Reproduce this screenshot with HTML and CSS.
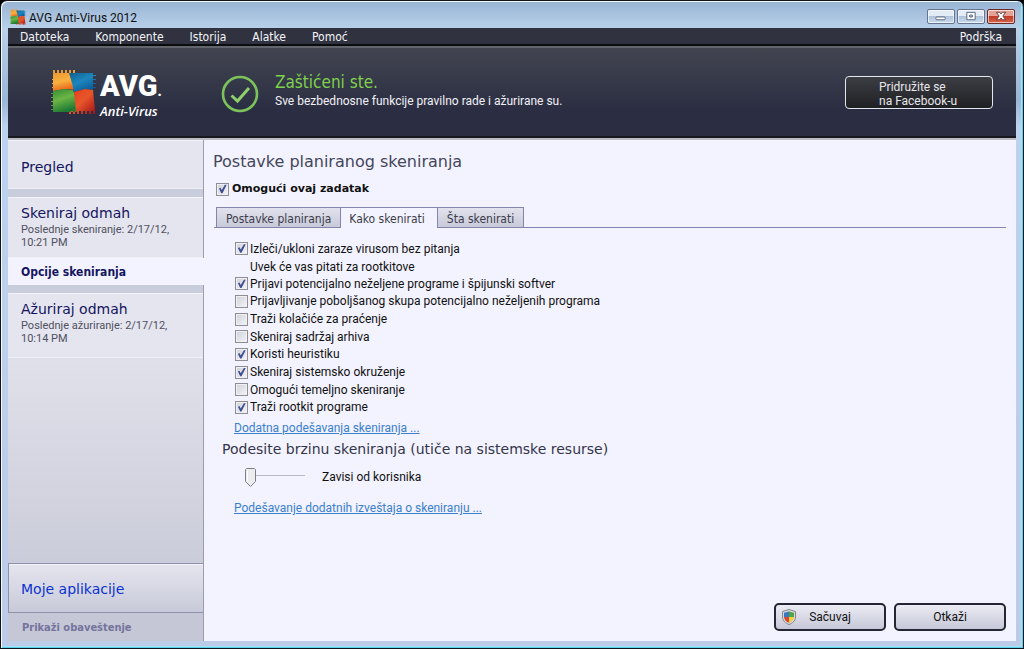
FILE: index.html
```html
<!DOCTYPE html>
<html lang="sr-Latn">
<head>
<meta charset="utf-8">
<title>AVG Anti-Virus 2012</title>
<link rel="stylesheet" href="styles.css">
</head>
<body>
<svg class="defs" width="0" height="0" aria-hidden="true">
  <defs>
    <linearGradient id="orange" x1="0" y1="0" x2="0.3" y2="1"><stop offset="0" stop-color="#e8912a"/><stop offset="0.6" stop-color="#f9b040"/><stop offset="1" stop-color="#e8661c"/></linearGradient>
    <linearGradient id="blue" x1="0" y1="0" x2="0.6" y2="1"><stop offset="0" stop-color="#0f5f8e"/><stop offset="0.5" stop-color="#1d86bd"/><stop offset="1" stop-color="#0d5a9a"/></linearGradient>
    <linearGradient id="green" x1="0" y1="0" x2="0.4" y2="1"><stop offset="0" stop-color="#2f8a35"/><stop offset="0.5" stop-color="#6cb544"/><stop offset="1" stop-color="#1f7a34"/></linearGradient>
    <linearGradient id="red" x1="0" y1="0" x2="1" y2="1"><stop offset="0" stop-color="#e23a1c"/><stop offset="0.5" stop-color="#e8562a"/><stop offset="1" stop-color="#a01018"/></linearGradient>
    <symbol id="flag" viewBox="0 0 46 46">
      <path fill="url(#orange)" d="M2 1h2v3h2V1h2v3h2V1h2v3h2V1h2v3h2V1h2v3h2V1h2v5l4 15-13-1-13 2v-3H1v-1h1v-3H1v-1h1v-3H1v-1h1z"/>
      <path fill="url(#green)" d="M2 22l11-2 9 1 4 11 2 11H2v-2H0v-1h2v-3H0v-1h2v-3H0v-1h2v-3H0v-1h2v-3H0v-1h2z"/>
      <path fill="url(#blue)" d="M18 4h24v2h3v1h-3v3h3v1h-3v3h3v1h-3v3h3v1h-3v2l-8-1-11 3-2-9z"/>
      <path fill="url(#red)" d="M23 23l11-3 8 1 2 20v4h-2v-3h-2v3h-2v-3h-2v3h-2v-3h-2v3h-2v-3h-2v3h-2v-3h-2v3h-2v-3h-2v3h-2v-2h7z"/>
    </symbol>
  </defs>
</svg>
<div class="window">
  <header class="titlebar">
    <svg class="app-icon" aria-hidden="true"><use href="#flag"/></svg>
    <span class="app-title">AVG Anti-Virus 2012</span>
    <div class="window-buttons">
      <button class="wbtn" aria-label="Minimize"><svg viewBox="0 0 26 14"><rect x="7.5" y="7.5" width="10" height="3" rx="1" fill="#fff" stroke="#51617a"/></svg></button>
      <button class="wbtn" aria-label="Maximize"><svg viewBox="0 0 26 14"><path fill="#fff" fill-rule="evenodd" stroke="#51617a" d="M8.500 2.500h9v8h-9zM11.500 5.500h3v2h-3z"/></svg></button>
      <button class="wbtn close" aria-label="Close"><svg viewBox="0 0 26 14"><path fill="#fff" stroke="#66383a" d="M8 2.500h3.500l1.500 1.800 1.500-1.800H18L15 6.500l3 4h-3.500L13 8.700l-1.500 1.800H8l3-4z"/></svg></button>
    </div>
  </header>
  <div class="client">
    <nav class="menu">
      <a href="#">Datoteka</a><a href="#">Komponente</a><a href="#">Istorija</a><a href="#">Alatke</a><a href="#">Pomoć</a><a href="#" class="support">Podrška</a>
    </nav>
    <section class="banner">
      <div class="brand">
        <svg class="brand-flag" aria-hidden="true"><use href="#flag"/></svg>
        <div class="brand-text"><div class="brand-name">AVG<span class="dot">.</span></div><div class="brand-sub">Anti-Virus</div></div>
      </div>
      <svg class="status-icon" viewBox="0 0 38 38" aria-hidden="true"><circle cx="19" cy="19" r="17" fill="none" stroke="#7cc35c" stroke-width="2.600"/><path d="M10.500 20.500l6 5.500L28 13" fill="none" stroke="#8ecf6c" stroke-width="3"/></svg>
      <div class="status"><h1>Zaštićeni ste.</h1><p>Sve bezbednosne funkcije pravilno rade i ažurirane su.</p></div>
      <button class="facebook"><span>Pridružite se<br>na Facebook-u</span></button>
    </section>
    <div class="body">
      <aside class="sidebar">
        <a href="#" class="card overview"><strong>Pregled</strong></a>
        <a href="#" class="card scan"><strong>Skeniraj odmah</strong><span>Poslednje skeniranje: 2/17/12,<br>10:21 PM</span></a>
        <a href="#" class="current">Opcije skeniranja</a>
        <a href="#" class="card update"><strong>Ažuriraj odmah</strong><span>Poslednje ažuriranje: 2/17/12,<br>10:14 PM</span></a>
        <a href="#" class="apps">Moje aplikacije</a>
        <a href="#" class="notice">Prikaži obaveštenje</a>
      </aside>
      <main class="main">
        <h2>Postavke planiranog skeniranja</h2>
        <label class="check enable"><input type="checkbox" checked>Omogući ovaj zadatak</label>
        <div class="tabs" role="tablist">
          <button role="tab" class="tab">Postavke planiranja</button><button role="tab" class="tab active" aria-selected="true">Kako skenirati</button><button role="tab" class="tab">Šta skenirati</button>
        </div>
        <div class="options">
          <label class="check"><input type="checkbox" checked>Izleči/ukloni zaraze virusom bez pitanja</label>
          <p class="hint">Uvek će vas pitati za rootkitove</p>
          <label class="check"><input type="checkbox" checked>Prijavi potencijalno neželjene programe i špijunski softver</label>
          <label class="check"><input type="checkbox">Prijavljivanje poboljšanog skupa potencijalno neželjenih programa</label>
          <label class="check"><input type="checkbox">Traži kolačiće za praćenje</label>
          <label class="check"><input type="checkbox">Skeniraj sadržaj arhiva</label>
          <label class="check"><input type="checkbox" checked>Koristi heuristiku</label>
          <label class="check"><input type="checkbox" checked>Skeniraj sistemsko okruženje</label>
          <label class="check"><input type="checkbox">Omogući temeljno skeniranje</label>
          <label class="check"><input type="checkbox" checked>Traži rootkit programe</label>
        </div>
        <a href="#" class="link">Dodatna podešavanja skeniranja ...</a>
        <h3 id="speed">Podesite brzinu skeniranja (utiče na sistemske resurse)</h3>
        <div class="speed"><input type="range" min="0" max="3" value="0" aria-labelledby="speed"><span>Zavisi od korisnika</span></div>
        <a href="#" class="link">Podešavanje dodatnih izveštaja o skeniranju ...</a>
        <div class="actions">
          <button class="btn"><svg class="shield" viewBox="0 0 14 16" aria-hidden="true"><path d="M7 .5L13.500 2.500V8C13.500 12 10 14.500 7 15.500 4 14.500.5 12 .5 8V2.500z" fill="#d8d8d8" stroke="#85858c"/><path d="M7 2.500V8H2V3.800z" fill="#3b78c4"/><path d="M7 2.500l5 1.300V8H7z" fill="#4fa34a"/><path d="M2 8h5v5.800C4.500 12.800 2.200 11 2 8z" fill="#d8442f"/><path d="M7 8h5c-.2 3-2.500 4.800-5 5.800z" fill="#f2cf3d"/></svg><span>Sačuvaj</span></button>
          <button class="btn"><span>Otkaži</span></button>
        </div>
      </main>
    </div>
  </div>
</div>
</body>
</html>
```
FILE: styles.css
```css
* { box-sizing: border-box; }
body {
  margin: 0;
  background: #000;
  font: 12px/14px Roboto, sans-serif;
  color: #111;
}
h1, h2, h3, p { margin: 0; font-weight: normal; }
a { color: inherit; text-decoration: none; }
button { font: inherit; color: inherit; padding: 0; margin: 0; }
.defs { display: block; position: absolute; }

.window {
  display: flex;
  flex-direction: column;
  min-height: 100vh;
  padding: 0 6px 6px;
  border: 1px solid #10141c;
  border-radius: 7px 7px 0 0;
  background: linear-gradient(#98b4d4, #b9d1ea 28px, #9ab6d6 100px, #bcd2ee 125px, #bccbe8);
  box-shadow: inset 1px 1px #f4f9ff, inset -1px -1px #5cd0ec, inset -2px -2px #9fe4f2;
}
.titlebar { display: flex; align-items: center; height: 27px; padding: 5px 2px 0 3px; }
.app-icon { width: 16px; height: 16px; }
.app-title { margin-left: 3px; padding-top: 1px; flex: 1; }
.window-buttons { display: flex; gap: 2px; padding-bottom: 1px; }
.wbtn {
  width: 28px;
  height: 15px;
  border: 1px solid #66758f;
  border-radius: 2px;
  background: linear-gradient(#e2ebf6 45%, #afc2da 50%, #cbdcf0);
  box-shadow: inset 0 0 0 1px rgb(255 255 255 / 60%);
}
.wbtn svg { display: block; width: 26px; height: 13px; }
.close { border-color: #6b2a2a; background: linear-gradient(#e5a193 45%, #c03c26 50%, #d8664a); }

.client { flex: 1; display: flex; flex-direction: column; margin: 0 1px 1px; background: #f3f3ff; }
.menu {
  display: flex;
  gap: 26px;
  height: 18px;
  padding: 2px 14px 0 12px;
  border-bottom: 2px solid #0b0c10;
  background: #303240;
  color: #f4f4f8;
  font-family: "DejaVu Sans Condensed", sans-serif;
}
.support { margin-left: auto; }
.banner {
  display: flex;
  align-items: center;
  height: 92px;
  padding: 0 24px 0 43px;
  border-top: 2px solid #62666c;
  border-bottom: 2px solid #17191f;
  background: linear-gradient(#424550, #2b2e42 70%, #2b2e43);
}
.brand { display: flex; width: 170px; padding-top: 3px; color: #fff; }
.brand-flag { width: 46px; height: 46px; flex: none; }
.brand-text { margin-left: 3px; padding-top: 3px; }
.brand-name { font: 900 29px/28px Roboto, sans-serif; }
.dot { font-size: 14px; }
.brand-sub { font: italic 600 13px/13px "Open Sans", sans-serif; white-space: nowrap; }
.status-icon { width: 38px; height: 38px; margin-top: 3px; }
.status { flex: 1; margin-left: 16px; padding-bottom: 3px; color: #f0f0f6; }
.status h1 { font: 17px/20px "DejaVu Sans Condensed", sans-serif; color: #7fd04c; }
.status p { line-height: 18px; }
.facebook {
  width: 148px;
  height: 33px;
  margin-right: -1px;
  border: 1px solid #e4e6f0;
  border-radius: 4px;
  background: linear-gradient(#3c3e44, #1f2023);
  color: #e6e6ea;
  text-align: left;
  padding: 3px 0 0 33px;
}

.body { flex: 1; display: flex; border-top: 2px solid #bcbcc4; }
.sidebar {
  display: flex;
  flex-direction: column;
  width: 196px;
  border-right: 1px solid #9a9caf;
  background: linear-gradient(#c8cddb 200px, #dfe0e9 220px, #c4c5d4);
}
.card {
  display: block;
  padding: 7px 0 0 13px;
  border-top: 1px solid #f2f2f8;
  border-bottom: 1px solid #efeff6;
  background: #e4e5ee;
  color: #50505e;
}
.card strong { display: block; font: 14px/18px "DejaVu Sans", sans-serif; color: #151560; }
.card span { display: block; padding-top: 1px; font-size: 11px; line-height: 13px; }
.overview { height: 49px; padding-top: 17px; }
.scan { height: 61px; margin-top: 8px; padding-top: 6px; }
.current { margin-right: -1px; height: 27px; padding: 7px 13px; background: #f3f3ff; color: #151560; font: bold 12px/14px "DejaVu Sans Condensed", sans-serif; }
.update { height: 65px; margin-top: 8px; padding-top: 6px; }
.apps {
  display: flex;
  align-items: center;
  height: 50px;
  margin-top: auto;
  padding: 2px 0 0 12px;
  border: 1px solid #8f91aa;
  border-right: 0;
  background: linear-gradient(#e4e5ee, #c9cad9);
  box-shadow: inset 0 1px #f2f2f8;
  color: #0a32d2;
  font: 14px/18px "DejaVu Sans", sans-serif;
}
.notice { height: 28px; padding: 8px 14px; background: #c5c6d6; color: #74749c; font: bold 11px/14px "DejaVu Sans Condensed", sans-serif; }

.main { flex: 1; display: flex; flex-direction: column; padding: 10px 10px 10px 9px; }
h2 { font: 16px/24px "DejaVu Sans", sans-serif; color: #44465a; }
.check { display: flex; align-items: center; gap: 3px; }
.check input {
  appearance: none;
  width: 13px;
  height: 13px;
  margin: 0;
  border: 1px solid #8e8f96;
  outline: 1px solid #f0f0f4;
  outline-offset: -2px;
  background: linear-gradient(135deg, #cfd1d8, #f4f4f8);
}
.check input:checked::before {
  content: "";
  display: block;
  width: 11px;
  height: 11px;
  background: #3e4f92;
  clip-path: polygon(18% 45%, 32% 38%, 43% 60%, 72% 12%, 88% 12%, 50% 88%, 38% 88%);
}
.enable { margin: 7px 0 0 3px; height: 16px; font: bold 11px/14px "DejaVu Sans", sans-serif; }
.tabs { display: flex; margin: 10px 0 0 1px; padding-left: 2px; border-bottom: 1px solid #8385ad; font-family: "DejaVu Sans Condensed", sans-serif; }
.tab {
  height: 20px;
  padding: 2px 9px 0;
  border: 1px solid #8385ad;
  border-bottom: 0;
  background: linear-gradient(#e2e2ee, #c8cad9);
  color: #3c3c4a;
}
.tab.active { height: 21px; margin-bottom: -1px; padding: 1px 12px 0 8px; border-width: 1px 0 0; background: #f3f3ff; }
.options { display: grid; align-content: space-between; min-height: 176px; margin: 12px 0 0 22px; grid-auto-rows: 17px; justify-items: start; }
.options .check { gap: 2px; }
.hint { padding: 2px 0 0 15px; }
.link { align-self: flex-start; margin: 5px 0 0 21px; color: #3a80cc; text-decoration: underline; }
h3 { margin: 5px 0 0 9px; font: 14px/18px "DejaVu Sans", sans-serif; color: #33354a; }
.speed { display: flex; align-items: center; height: 24px; margin: 7px 0 7px 32px; }
.speed input { appearance: none; width: 60px; height: 20px; margin: 0 17px 0 0; background: linear-gradient(#b8b9c2, #b8b9c2) center 8px / 100% 1px no-repeat; }
.speed input::-webkit-slider-thumb {
  appearance: none;
  width: 11px;
  height: 19px;
  background: url("data:image/svg+xml,%3Csvg xmlns='http://www.w3.org/2000/svg' width='11' height='19'%3E%3Cpath d='M1.500 .5h8l1 1v12l-5 5-5-5v-12z' fill='%23ececef' stroke='%237d7e86'/%3E%3Cpath d='M2.500 2.500v11' stroke='%23fff'/%3E%3C/svg%3E") no-repeat;
}
.actions { display: flex; justify-content: flex-end; gap: 8px; margin-top: auto; }
.btn {
  display: flex;
  align-items: center;
  width: 112px;
  height: 28px;
  border: 2px solid #242633;
  border-radius: 5px;
  background: linear-gradient(#ececf4, #c6c7d8);
  padding: 0 20px 0 6px;
}
.btn span { flex: 1; text-align: center; }
.btn:last-child { padding: 0; }
.shield { width: 14px; height: 16px; }
```
